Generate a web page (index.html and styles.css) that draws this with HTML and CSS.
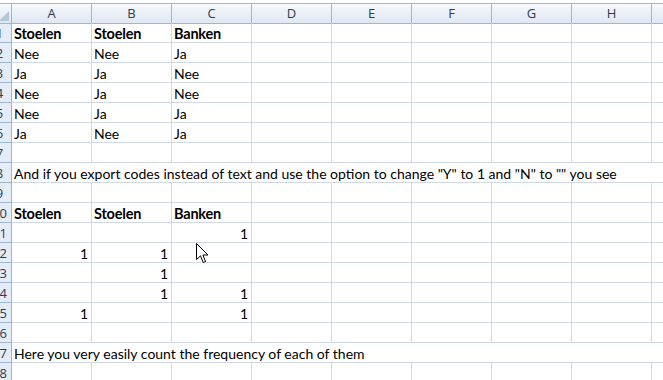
FILE: index.html
```html
<!DOCTYPE html>
<html lang="en">
<head>
    <meta charset="UTF-8">
    <title>Stoelen en Banken</title>
    <link rel="stylesheet" href="styles.css">
</head>
<body>
    <div class="window">
        <div class="sheet">
            <!-- column headers -->
            <div class="corner"><span class="corner-mark"></span></div>
            <div class="col-head">A</div>
            <div class="col-head">B</div>
            <div class="col-head">C</div>
            <div class="col-head">D</div>
            <div class="col-head">E</div>
            <div class="col-head">F</div>
            <div class="col-head">G</div>
            <div class="col-head">H</div>
            <div class="col-head">I</div>

            <div class="row-head">1</div>
            <div class="cell bold">Stoelen</div><div class="cell bold">Stoelen</div><div class="cell bold">Banken</div>
            <div class="cell"></div><div class="cell"></div><div class="cell"></div><div class="cell"></div><div class="cell"></div><div class="cell"></div>

            <div class="row-head">2</div>
            <div class="cell">Nee</div><div class="cell">Nee</div><div class="cell">Ja</div>
            <div class="cell"></div><div class="cell"></div><div class="cell"></div><div class="cell"></div><div class="cell"></div><div class="cell"></div>

            <div class="row-head">3</div>
            <div class="cell">Ja</div><div class="cell">Ja</div><div class="cell">Nee</div>
            <div class="cell"></div><div class="cell"></div><div class="cell"></div><div class="cell"></div><div class="cell"></div><div class="cell"></div>

            <div class="row-head">4</div>
            <div class="cell">Nee</div><div class="cell">Ja</div><div class="cell">Nee</div>
            <div class="cell"></div><div class="cell"></div><div class="cell"></div><div class="cell"></div><div class="cell"></div><div class="cell"></div>

            <div class="row-head">5</div>
            <div class="cell">Nee</div><div class="cell">Ja</div><div class="cell">Ja</div>
            <div class="cell"></div><div class="cell"></div><div class="cell"></div><div class="cell"></div><div class="cell"></div><div class="cell"></div>

            <div class="row-head">6</div>
            <div class="cell">Ja</div><div class="cell">Nee</div><div class="cell">Ja</div>
            <div class="cell"></div><div class="cell"></div><div class="cell"></div><div class="cell"></div><div class="cell"></div><div class="cell"></div>

            <div class="row-head">7</div>
            <div class="cell"></div><div class="cell"></div><div class="cell"></div>
            <div class="cell"></div><div class="cell"></div><div class="cell"></div><div class="cell"></div><div class="cell"></div><div class="cell"></div>

            <div class="row-head">8</div>
            <div class="cell wide">And if you export codes instead of text and use the option to change "Y" to 1 and "N" to "" you see</div>

            <div class="row-head">9</div>
            <div class="cell"></div><div class="cell"></div><div class="cell"></div>
            <div class="cell"></div><div class="cell"></div><div class="cell"></div><div class="cell"></div><div class="cell"></div><div class="cell"></div>

            <div class="row-head">10</div>
            <div class="cell bold">Stoelen</div><div class="cell bold">Stoelen</div><div class="cell bold">Banken</div>
            <div class="cell"></div><div class="cell"></div><div class="cell"></div><div class="cell"></div><div class="cell"></div><div class="cell"></div>

            <div class="row-head">11</div>
            <div class="cell num"></div><div class="cell num"></div><div class="cell num">1</div>
            <div class="cell"></div><div class="cell"></div><div class="cell"></div><div class="cell"></div><div class="cell"></div><div class="cell"></div>

            <div class="row-head">12</div>
            <div class="cell num">1</div><div class="cell num">1</div><div class="cell num"></div>
            <div class="cell"></div><div class="cell"></div><div class="cell"></div><div class="cell"></div><div class="cell"></div><div class="cell"></div>

            <div class="row-head">13</div>
            <div class="cell num"></div><div class="cell num">1</div><div class="cell num"></div>
            <div class="cell"></div><div class="cell"></div><div class="cell"></div><div class="cell"></div><div class="cell"></div><div class="cell"></div>

            <div class="row-head">14</div>
            <div class="cell num"></div><div class="cell num">1</div><div class="cell num">1</div>
            <div class="cell"></div><div class="cell"></div><div class="cell"></div><div class="cell"></div><div class="cell"></div><div class="cell"></div>

            <div class="row-head">15</div>
            <div class="cell num">1</div><div class="cell num"></div><div class="cell num">1</div>
            <div class="cell"></div><div class="cell"></div><div class="cell"></div><div class="cell"></div><div class="cell"></div><div class="cell"></div>

            <div class="row-head">16</div>
            <div class="cell"></div><div class="cell"></div><div class="cell"></div>
            <div class="cell"></div><div class="cell"></div><div class="cell"></div><div class="cell"></div><div class="cell"></div><div class="cell"></div>

            <div class="row-head">17</div>
            <div class="cell wide">Here you very easily count the frequency of each of them</div>

            <div class="row-head">18</div>
            <div class="cell"></div><div class="cell"></div><div class="cell"></div>
            <div class="cell"></div><div class="cell"></div><div class="cell"></div><div class="cell"></div><div class="cell"></div><div class="cell"></div>
        </div>

        <!-- mouse pointer -->
        <svg class="pointer" width="13" height="21" viewBox="0 0 13 21">
            <path d="M0.5 0.5 L0.5 16.5 L4.5 12.8 L7.2 19.5 L9.6 18.5 L6.9 12 L12 12 Z" fill="#fff" stroke="#000" stroke-width="1" stroke-linejoin="miter"/>
        </svg>
    </div>
</body>
</html>
```

FILE: styles.css
```css
body {
    margin: 0;
    background: #ffffff;
    overflow: hidden;
}

.window {
    position: relative;
    width: 663px;
    height: 380px;
    overflow: hidden;
    padding-top: 3px;
    box-sizing: border-box;
}

.sheet {
    display: grid;
    grid-template-columns: 24px repeat(9, 80px);
    grid-auto-rows: 20px;
    margin-left: -12px;
    font-family: "Lato", "Liberation Sans", sans-serif;
    font-size: 14px;
    color: #000;
}

.corner,
.col-head {
    height: 21px;
    box-sizing: border-box;
    border-top: 1px solid #9eb6ce;
    border-bottom: 1px solid #9eb6ce;
    border-right: 1px solid #9eb6ce;
    background: linear-gradient(to bottom, #f6f9fc, #dfe7f2);
}

.corner {
    position: relative;
}

.corner-mark {
    position: absolute;
    right: 2px;
    bottom: 2px;
    width: 0;
    height: 0;
    border-left: 10px solid transparent;
    border-bottom: 10px solid #b5c6da;
}

.col-head {
    text-align: center;
    line-height: 19px;
    color: #2f3b4c;
    font-family: "Open Sans", "Liberation Sans", sans-serif;
    font-size: 13px;
}

.row-head {
    box-sizing: border-box;
    border-right: 1px solid #9eb6ce;
    border-bottom: 1px solid #9eb6ce;
    background: #e4ecf7;
    text-align: center;
    padding-top: 1px;
    line-height: 19px;
    color: #2f3b4c;
    font-family: "Open Sans", "Liberation Sans", sans-serif;
    font-size: 13px;
}

.cell {
    box-sizing: border-box;
    border-right: 1px solid #d0d7e5;
    border-bottom: 1px solid #d0d7e5;
    padding: 2px 3px 0 2px;
    line-height: 18px;
    white-space: nowrap;
    overflow: hidden;
}

.bold {
    font-weight: bold;
    font-size: 14.5px;
    letter-spacing: -0.2px;
}

.num {
    text-align: right;
}

.wide {
    grid-column: span 9;
    overflow: visible;
}

.pointer {
    position: absolute;
    left: 196px;
    top: 243px;
}
```
